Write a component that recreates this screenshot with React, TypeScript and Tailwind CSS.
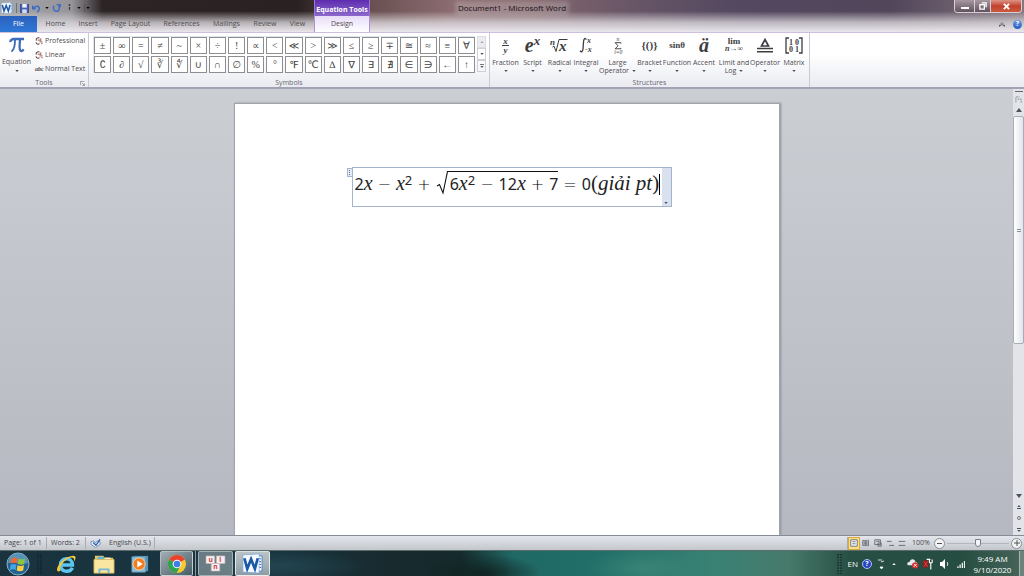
import type { ReactNode } from 'react';
import { clsx } from 'clsx';

const TABS = [
  { name: 'Home', width: 'w-[37px]' },
  { name: 'Insert', width: 'w-[28px]' },
  { name: 'Page Layout', width: 'w-[57px]' },
  { name: 'References', width: 'w-[45px]' },
  { name: 'Mailings', width: 'w-[45px]' },
  { name: 'Review', width: 'w-[32px]' },
  { name: 'View', width: 'w-[33px]' },
];

const SYMBOLS = [
  '±', '∞', '=', '≠', '~', '×', '÷', '!', '∝', '<', '≪', '>', '≫', '≤', '≥', '∓', '≅', '≈', '≡', '∀',
  '∁', '∂', '√', '∛', '∜', '∪', '∩', '∅', '%', '°', '℉', '℃', '∆', '∇', '∃', '∄', '∈', '∋', '←', '↑',
];

function Caret({ className }: { className?: string }) {
  return (
    <svg viewBox="0 0 5 3" className={clsx('h-[2px] w-[4px] shrink-0', className)}>
      <path d="M0 0h5L2.500 3z" fill="currentColor" />
    </svg>
  );
}

function ScrollArrow({ className }: { className?: string }) {
  return (
    <svg viewBox="0 0 6 4" className={clsx('h-1 w-[6px] shrink-0', className)}>
      <path d="M0 0h6L3 4z" fill="currentColor" />
    </svg>
  );
}

function WordLogo({ className }: { className?: string }) {
  return (
    <svg viewBox="0 0 22 22" className={className}>
      <path d="M8 3h13v16H8z" fill="#fff" stroke="#4b83c8" />
      <path d="M18 6h2M18 9h2M18 12h2M18 15h2" stroke="#3b74bd" strokeWidth="1.200" />
      <path d="M1 2L18 1v20L1 20z" fill="#f4f9ff" stroke="#78a8df" strokeWidth=".7" />
      <path d="M2.500 5.500l3 11L9.500 6.500l4 10 3-11" fill="none" stroke="#1d57a7" strokeWidth="2.800" />
    </svg>
  );
}

function TitleBar() {
  return (
    <div className="flex h-4 items-center">
      <div className="flex w-[314px] items-center gap-[3px] pl-px text-[#374a78]">
        <WordLogo className="size-3" />
        <span className="h-[10px] border-l border-[#6f7078]" />
        <button type="button" aria-label="Save">
          <svg viewBox="0 0 10 10" className="size-[9px]">
            <path d="M.5.5h9v9h-9z" fill="#4a62b5" stroke="#31458d" />
            <path d="M2.500 0h5v4h-5z" fill="#eef2ff" />
            <path d="M2.500 6h5v4h-5z" fill="#d5dcf2" />
          </svg>
        </button>
        <button type="button" aria-label="Undo" className="flex items-center gap-1">
          <svg viewBox="0 0 10 10" className="size-[9px]">
            <path d="M2 5c2-4 7-3 6 1-.3 1.500-1 2.300-2.500 3" fill="none" stroke="#3a6cc4" strokeWidth="1.700" />
            <path d="M0 1v5h5z" fill="#3a6cc4" />
          </svg>
          <Caret className="text-black" />
        </button>
        <button type="button" aria-label="Repeat">
          <svg viewBox="0 0 10 10" className="size-[9px]">
            <path d="M2 2c-2 7 6 8 6 3V2" fill="none" stroke="#3f6fc2" strokeWidth="1.700" />
            <path d="M4 0h6v4z" fill="#3f6fc2" />
          </svg>
        </button>
        <button type="button" aria-label="Touch mode" className="ml-1 flex items-center gap-[6px]">
          <svg viewBox="0 0 4 10" className="h-[8px] w-[3px]">
            <path d="M1 0h2v2H1zM1 4h2l-1 5z" fill="#222" />
          </svg>
          <Caret className="text-black" />
        </button>
        <button type="button" aria-label="Customize Quick Access Toolbar" className="flex h-2 items-center border-l border-[#5b5557] pl-px text-black">
          <Caret />
        </button>
      </div>
      <div className="flex h-full w-14 items-center justify-center border-x border-[#9a76d8] bg-linear-to-b from-[#5f2bb0] to-[#8b68cb] pt-[3px] font-bold text-white">
        <span className="whitespace-nowrap">Equation Tools</span>
      </div>
      <h1 className="ml-[88px] bg-white/20 text-[8px] leading-[8px] text-[#17121a] shadow-[0_0_4px_3px_rgba(255,255,255,0.2)]">
        Document1 - Microsoft Word
      </h1>
      <div className="mr-[2px] ml-auto flex h-[13px] self-start overflow-hidden rounded-b-sm border border-t-0 border-[#d8cfd6]">
        <button type="button" aria-label="Minimize" className="flex w-[19px] items-end justify-center bg-linear-to-b from-[#a899a1] to-[#62525e] pb-[3px]">
          <span className="h-[2px] w-2 bg-white" />
        </button>
        <button type="button" aria-label="Restore" className="flex w-[17px] items-center justify-center border-x border-[#d8cfd6] bg-linear-to-b from-[#a899a1] to-[#62525e]">
          <svg viewBox="0 0 9 9" className="size-[8px]">
            <path d="M3 1h5v5M1 3h5v5H1z" fill="none" stroke="#fff" strokeWidth="1.500" />
          </svg>
        </button>
        <button type="button" aria-label="Close" className="flex w-[30px] items-center justify-center bg-linear-to-b from-[#dc9387] via-[#c2402c] to-[#cb5a3f]">
          <svg viewBox="0 0 8 8" className="size-[7px]">
            <path d="M1 1l6 6M7 1L1 7" stroke="#fff" strokeWidth="2.200" />
          </svg>
        </button>
      </div>
    </div>
  );
}

function TabRow() {
  return (
    <nav className="flex h-4 items-stretch text-[#4f4c50]">
      <button type="button" className="w-[37px] bg-linear-to-b from-[#2a61bd] to-[#2f78d6] text-white">File</button>
      {TABS.map(tab => (
        <button type="button" key={tab.name} className={clsx('text-center whitespace-nowrap', tab.width)}>
          {tab.name}
        </button>
      ))}
      <button type="button" className="w-14 border-x border-[#ae92db] bg-linear-to-b from-[#e8ddf7] to-white">Design</button>
      <div className="mr-[2px] ml-auto flex items-center gap-2">
        <button type="button" aria-label="Minimize the Ribbon">
          <svg viewBox="0 0 6 5" className="h-[5px] w-[6px]">
            <path d="M.5 3L3 .7 5.500 3v1.300L3 2.300.5 4.300z" fill="#fff" stroke="#444" strokeWidth=".8" />
          </svg>
        </button>
        <button type="button" aria-label="Help" className="size-[9px] rounded-full bg-linear-to-b from-[#6c9be8] to-[#235bbd] text-center font-bold text-white">?</button>
      </div>
    </nav>
  );
}

function RibbonGroup({ label, className, children, launcher }: {
  label: string;
  className?: string;
  children: ReactNode;
  launcher?: boolean;
}) {
  return (
    <section className={clsx('flex flex-col border-r border-[#cbc9d6]', className)} aria-label={label}>
      <div className="flex flex-1 items-start">{children}</div>
      <div className="relative h-2 text-center text-[#686872]">
        <span>{label}</span>
        {launcher && (
          <button type="button" aria-label="Tools options" className="absolute right-[3px] bottom-px">
            <svg viewBox="0 0 6 6" className="size-[5px]">
              <path d="M.5 5V.5H5M2.500 2.500L5.500 5.500M5.500 3v2.500H3" fill="none" stroke="#777" strokeWidth=".8" />
            </svg>
          </button>
        )}
      </div>
    </section>
  );
}

function SwirlIcon() {
  return (
    <svg viewBox="0 0 9 9" className="size-[8px]">
      <path d="M5 1C2 .5 1 2 1.500 4M1 6c1 2.500 3 2.500 4 1.500" fill="none" stroke="#5d4a48" strokeWidth="1.200" />
      <path d="M3 3.500h3M6.500 1.500v3M5 5.500h3.500M7 7.500h1.500" stroke="#8f5a50" strokeWidth="1.100" />
    </svg>
  );
}

function ToolsGroup() {
  return (
    <RibbonGroup label="Tools" className="w-[89px]" launcher>
      <button type="button" className="flex w-[33px] flex-col items-center text-[#4e4a50]">
        <svg viewBox="0 0 16 16" className="mt-1 h-[16px] w-[16px]">
          <path d="M1 5c1-3 2.500-3 4-3h10" fill="none" stroke="#3f6cb8" strokeWidth="2.300" />
          <path d="M6 3c0 5-.5 9-3 11" fill="none" stroke="#3f6cb8" strokeWidth="1.900" strokeLinecap="round" />
          <path d="M11 3c-.3 4-1 7 0 10 .7 1.500 2.500 1.500 3.500-.7" fill="none" stroke="#3f6cb8" strokeWidth="2.300" />
        </svg>
        <span className="mt-[5px]">Equation</span>
        <Caret className="mt-1" />
      </button>
      <div className="mt-1 flex flex-col items-start gap-[6px] pl-[2px] whitespace-nowrap text-[#4e4a50]">
        <button type="button" className="flex items-center gap-[2px]"><SwirlIcon />Professional</button>
        <button type="button" className="flex items-center gap-[2px]"><SwirlIcon />Linear</button>
        <button type="button" className="flex items-center gap-[2px]">
          <i className="w-2 font-['Liberation_Serif',serif] text-[6px] font-bold">abc</i>Normal Text
        </button>
      </div>
    </RibbonGroup>
  );
}

function SymbolsGroup() {
  return (
    <RibbonGroup label="Symbols" className="w-[401px]">
      <div className="mt-[3px] ml-1 flex flex-1">
        <div className="grid w-[382px] grid-cols-20 gap-[2px] border-t border-l border-[#e3e3ea] font-['Liberation_Serif','DejaVu_Sans',serif] text-[10px] text-[#3f3f43]">
          {SYMBOLS.map(symbol => (
            <button type="button" key={symbol} className="flex h-[17px] items-center justify-center border border-[#8e8e92] bg-white">
              {symbol}
            </button>
          ))}
        </div>
        <div className="ml-[2px] flex w-[9px] flex-col text-[#555]">
          <button type="button" aria-label="Scroll up" className="flex h-3 items-center justify-center border border-[#dcdce2] bg-[#ececf0] text-[#aaa]"><Caret className="rotate-180" /></button>
          <button type="button" aria-label="Scroll down" className="flex h-3 items-center justify-center border border-[#cfcfd8]"><Caret /></button>
          <button type="button" aria-label="More symbols" className="flex h-3 flex-col items-center justify-center gap-px border border-[#cfcfd8]">
            <span className="h-px w-1 bg-[#777]" />
            <Caret />
          </button>
        </div>
      </div>
    </RibbonGroup>
  );
}

function Structure({ name, second, width, children }: {
  name: string;
  second?: string;
  width: string;
  children: ReactNode;
}) {
  return (
    <button type="button" className={clsx('flex shrink-0 flex-col items-center whitespace-nowrap text-[#4e4a50]', width)}>
      <span className="mt-[2px] flex h-5 items-center justify-center font-['Liberation_Serif',serif] text-[#3d3d42]">
        {children}
      </span>
      <span className="mt-1">{name}</span>
      {second ? (
        <span className="flex items-center gap-[3px]">{second}<Caret /></span>
      ) : (
        <Caret className="mt-[3px]" />
      )}
    </button>
  );
}

function StructuresGroup() {
  return (
    <RibbonGroup label="Structures" className="w-[320px]">
      <div className="flex pl-[2px]">
        <Structure name="Fraction" width="w-[27px]">
          <i className="flex flex-col items-center text-[9px] leading-[8px] font-bold">
            <span className="border-b border-current px-px">x</span>
            <span>y</span>
          </i>
        </Structure>
        <Structure name="Script" width="w-[27px]">
          <i className="text-[20px] font-bold">e</i>
          <i className="self-start text-[13px] leading-[12px] font-bold">x</i>
        </Structure>
        <Structure name="Radical" width="w-[27px]">
          <svg viewBox="0 0 19 16" className="h-4 w-[19px]">
            <text x="0" y="8" fontSize="9" fontStyle="italic" fontWeight="bold" fill="#3d3d42">n</text>
            <path d="M2.500 10l1.500-1 2 5.500L9 2.500h8.500" fill="none" stroke="#3d3d42" strokeWidth="1" />
            <text x="9" y="14" fontSize="15" fontStyle="italic" fontWeight="bold" fill="#3d3d42">x</text>
          </svg>
        </Structure>
        <Structure name="Integral" width="w-[26px]">
          <svg viewBox="0 0 15 17" className="h-[17px] w-[15px]">
            <path d="M7.500 2.500C6 .3 4.700 2 4.500 5L4 12c-.3 3-1.500 3.500-3 1.800" fill="none" stroke="#3d3d42" strokeWidth="1.300" />
            <text x="8" y="6" fontSize="8" fontStyle="italic" fontWeight="bold" fill="#3d3d42">x</text>
            <text x="6" y="15" fontSize="8" fontStyle="italic" fontWeight="bold" fill="#3d3d42">-x</text>
          </svg>
        </Structure>
        <Structure name="Large" second="Operator" width="w-[37px]">
          <svg viewBox="0 0 10 18" className="h-[17px] w-[10px]">
            <text x="3.500" y="4" fontSize="6" fontStyle="italic" fill="#3d3d42">n</text>
            <path d="M8 7V6H2l3 3.300L2 12.500h6v-1" fill="none" stroke="#3d3d42" strokeWidth="1" />
            <text x="1" y="18" fontSize="6" fontStyle="italic" fill="#3d3d42">i=0</text>
          </svg>
        </Structure>
        <Structure name="Bracket" width="w-[27px]">
          <span className="text-[11px] font-bold">{'{()}'}</span>
        </Structure>
        <Structure name="Function" width="w-[28px]">
          <span className="text-[9px] font-bold">sinθ</span>
        </Structure>
        <Structure name="Accent" width="w-[26px]">
          <i className="text-[20px] font-bold">ä</i>
        </Structure>
        <Structure name="Limit and" second="Log" width="w-[34px]">
          <span className="flex flex-col items-center text-[9px] leading-[7px] font-bold">
            <span>lim</span>
            <i className="text-[8px]">n→∞</i>
          </span>
        </Structure>
        <Structure name="Operator" width="w-[28px]">
          <svg viewBox="0 0 16 16" className="size-4">
            <path d="M4.500 9L8 2.500 11.500 9z" fill="none" stroke="#3d3d42" strokeWidth="1.700" />
            <path d="M0 11.500h16M0 14.700h16" stroke="#3d3d42" strokeWidth="1.500" />
          </svg>
        </Structure>
        <Structure name="Matrix" width="w-[30px]">
          <svg viewBox="0 0 18 17" className="h-[17px] w-[18px]">
            <path d="M4 1H1v15h3M14 1h3v15h-3" fill="none" stroke="#3d3d42" strokeWidth="1.300" />
            <g fontSize="8" fontWeight="bold" fill="#3d3d42">
              <text x="4" y="8">1</text>
              <text x="10" y="8">0</text>
              <text x="4" y="15">0</text>
              <text x="10" y="15">1</text>
            </g>
          </svg>
        </Structure>
      </div>
    </RibbonGroup>
  );
}

function Operator({ children }: { children: string }) {
  return (
    <span className="mx-[5px]">
      <span className="font-['DejaVu_Sans',sans-serif] leading-none font-extralight text-black">{children}</span>
    </span>
  );
}

function Variable() {
  return <i className="font-['Liberation_Serif',serif] text-[20px] leading-none">x</i>;
}

function Squared() {
  return <><Variable /><sup className="top-[-5px] text-[13px] leading-none">2</sup></>;
}

function Equation() {
  return (
    <div className="mt-[63px] ml-[112px] flex items-start">
      <div className="mt-px flex h-[9px] w-[5px] flex-col items-center justify-center gap-px border border-r-0 border-[#a5b6cf] bg-[#e3eaf5]">
        <span className="size-px bg-[#60789e]" />
        <span className="size-px bg-[#60789e]" />
        <span className="size-px bg-[#60789e]" />
      </div>
      <div className="flex h-10 w-[320px] border border-[#a3b4cc]">
        <div
          role="textbox"
          aria-label="Equation"
          tabIndex={0}
          className="flex flex-1 items-center self-start pt-[3px] pl-[2px] font-['Noto_Sans',sans-serif] text-[16px] leading-6 whitespace-nowrap text-[#222] outline-none"
        >
          <span>2<Variable /></span>
          <Operator>−</Operator>
          <span><Squared /></span>
          <Operator>+</Operator>
          <svg viewBox="0 0 12 26" className="h-[26px] w-3">
            <path d="M1 15l2.500-1.500L7 22 11.500.5H12" fill="none" stroke="#111" strokeWidth="1.100" />
          </svg>
          <span className="flex items-center border-y border-t-[#111] border-b-transparent pl-[2px]">
            <span>6<Squared /></span>
            <Operator>−</Operator>
            <span>12<Variable /></span>
            <Operator>+</Operator>
            <span>7</span>
          </span>
          <Operator>=</Operator>
          <span>
            0
            <span className="font-['Liberation_Serif',serif] text-[21px] leading-none">(<i>giải pt</i>)</span>
          </span>
          <span className="h-[21px] w-px bg-black" />
        </div>
        <button type="button" aria-label="Equation options" className="flex w-[9px] shrink-0 items-end justify-center bg-[#d9e1ef] pb-[2px] text-[#3b4f75]">
          <Caret />
        </button>
      </div>
    </div>
  );
}

function ScrollBar() {
  return (
    <div className="flex w-[11px] flex-col items-center bg-[#e2e4ea] text-[#4c515c]">
      <span className="mt-[2px] h-px w-2 bg-[#62666e]" />
      <button type="button" aria-label="View ruler" className="mt-1">
        <svg viewBox="0 0 8 8" className="size-[7px]">
          <path d="M1 7V1h4M3 3.500h4v4" fill="none" stroke="#777d8a" strokeDasharray="2 1" />
        </svg>
      </button>
      <button type="button" aria-label="Scroll up" className="flex h-[13px] items-center"><ScrollArrow className="rotate-180" /></button>
      <div className="flex w-full flex-1 flex-col">
        <div className="flex h-[61%] flex-col items-center justify-center gap-px rounded-xs border border-[#a9adb8] bg-linear-to-r from-white to-[#e3e5ec]">
          <span className="h-px w-1 bg-[#8b909c]" />
          <span className="h-px w-1 bg-[#8b909c]" />
        </div>
      </div>
      <button type="button" aria-label="Scroll down" className="flex h-[11px] items-center"><ScrollArrow /></button>
      <button type="button" aria-label="Previous page" className="flex h-[11px] flex-col items-center justify-center gap-px"><Caret className="rotate-180" /><span className="h-px w-1 bg-current" /></button>
      <button type="button" aria-label="Select browse object" className="flex h-3 items-center"><span className="size-1 rounded-full border border-[#777]" /></button>
      <button type="button" aria-label="Next page" className="flex h-[11px] flex-col items-center justify-center gap-px"><span className="h-px w-1 bg-current" /><Caret /></button>
    </div>
  );
}

const VIEWS = [
  { name: 'Print Layout', d: 'M1 1h8v8H1zM3 3.500h4M3 6h4' },
  { name: 'Full Screen Reading', d: 'M1 2h3.500v6H1zM6 1v8M8 1v8M2 4h2M2 6h2' },
  { name: 'Web Layout', d: 'M1 1h7v6H1zM3 3h4M5 5h4v4H5z' },
  { name: 'Outline', d: 'M1 3h6M4 8h6' },
  { name: 'Draft', d: 'M1 3h8M1 8h8' },
];

function StatusBar() {
  return (
    <footer className="flex h-[15px] shrink-0 items-center border-t border-[#868c95] bg-linear-to-b from-[#e4e6ed] to-[#c3c7cb] text-[#46464a]">
      <span className="w-[47px] border-r border-[#a8abb2] pl-1 leading-[12px]">Page: 1 of 1</span>
      <span className="w-[38px] pl-1 leading-[12px] whitespace-nowrap">Words: 2</span>
      <button type="button" aria-label="Proofing" className="flex h-3 w-5 items-center justify-center border-l border-[#a8abb2]">
        <svg viewBox="0 0 12 10" className="h-[9px] w-[11px]">
          <path d="M1 3c2-1 3-1 5 1 1-2 3-2 5-1v3L6 9.500 1 6z" fill="#e9eff9" stroke="#6d88b5" />
          <path d="M3.500 4l3 3L11 .5" fill="none" stroke="#315fae" strokeWidth="1.500" />
        </svg>
      </button>
      <span className="h-3 w-[50px] border-r border-[#a8abb2] pl-1 leading-[12px] whitespace-nowrap">English (U.S.)</span>
      <div className="ml-auto flex items-center border-l border-[#a8abb2]">
        {VIEWS.map((view, i) => (
          <button
            type="button"
            key={view.name}
            aria-label={view.name}
            className={clsx('flex h-[13px] w-3 items-center justify-center', i === 0 && 'border border-[#d9a93c] bg-[#fbe08c]')}
          >
            <svg viewBox="0 0 10 10" className="size-[8px]">
              <path d={view.d} fill={i === 0 ? '#fff' : 'none'} stroke="#5c6470" strokeWidth="1.100" />
            </svg>
          </button>
        ))}
      </div>
      <button type="button" className="w-[26px] text-center">100%</button>
      <button type="button" aria-label="Zoom out" className="flex size-[11px] items-center justify-center rounded-full border border-[#8a8d94] bg-[#f2f3f5]">
        <span className="h-px w-[5px] bg-[#555]" />
      </button>
      <input
        type="range"
        aria-label="Zoom"
        defaultValue={50}
        className="mx-[2px] h-[9px] w-[62px] appearance-none bg-[linear-gradient(#b3b6bc,#b3b6bc)] bg-[length:100%_1px] bg-center bg-no-repeat [&::-webkit-slider-thumb]:h-[8px] [&::-webkit-slider-thumb]:w-[6px] [&::-webkit-slider-thumb]:appearance-none [&::-webkit-slider-thumb]:rounded-b-sm [&::-webkit-slider-thumb]:border [&::-webkit-slider-thumb]:border-[#7b7e86] [&::-webkit-slider-thumb]:bg-[#f4f5f8]"
      />
      <button type="button" aria-label="Zoom in" className="mr-[2px] flex size-[11px] items-center justify-center rounded-full border border-[#8a8d94] bg-[#f2f3f5]">
        <svg viewBox="0 0 6 6" className="size-[6px]">
          <path d="M0 3h6M3 0v6" stroke="#555" />
        </svg>
      </button>
    </footer>
  );
}

function Grip({ className }: { className?: string }) {
  return (
    <svg viewBox="0 0 5 20" className={clsx('h-5 w-[5px]', className)}>
      <path d="M1 0v20M4 0v20" stroke="#0b1a1c" strokeWidth="1.200" strokeDasharray="1.200 1.500" />
    </svg>
  );
}

function TaskButton({ name, className, children }: { name: string; className?: string; children: ReactNode }) {
  return (
    <button type="button" aria-label={name} className={clsx('flex h-full items-center justify-center', className)}>
      {children}
    </button>
  );
}

function TaskBar() {
  return (
    <div className="flex h-[26px] shrink-0 items-center border-t border-[#5a6d6c] bg-[radial-gradient(ellipse_90px_16px_at_27%_60%,#234550,transparent),radial-gradient(ellipse_60px_20px_at_47%_90%,#102322,transparent),radial-gradient(ellipse_60px_20px_at_63%_70%,#3a8376,transparent),linear-gradient(to_right,#1a333e,#183541_25%,#182a2e_38%,#152a2c_45%,#206864_50%,#217069_60%,#3a8274_70%,#477a6b_77%,#274f43_83%,#264d41_94%,#48655a)]">
      <TaskButton name="Start" className="w-[35px]">
        <svg viewBox="0 0 24 24" className="size-6">
          <circle cx="12" cy="12" r="11" fill="#24618f" stroke="#8bb5cc" />
          <path d="M2 11a10 10 0 0120 0c-7 2-13-2-20 0z" fill="#6da8ca" opacity=".7" />
          <path d="M5.500 6.500c2-1.300 4-1.300 6-.3l-.8 5.300c-2-1-4-.8-6 .2z" fill="#ef6a32" />
          <path d="M12.500 6.700c2 1 4 .8 6.500-.2l-.8 5.500c-2 1-4.500 1-6.500 0z" fill="#8bc540" />
          <path d="M4.500 13c2-1.200 4-1.200 6-.2l-.8 5.200c-2-1-4-.8-6 .2z" fill="#41a4e5" />
          <path d="M11.500 13.300c2 1 4.500.8 6.500-.2l-.8 5.500c-2 1-4.500 1-6.500 0z" fill="#fbcf41" />
        </svg>
      </TaskButton>
      <Grip className="ml-[2px]" />
      <TaskButton name="Internet Explorer" className="ml-[6px] w-9">
        <svg viewBox="0 0 24 24" className="size-[22px]">
          <path d="M19 16c-3 6-13 5-13-3 0-9 13-9 13 0H7" fill="none" stroke="#5bc6ef" strokeWidth="3.800" />
          <path d="M3 20C-1 17 10 3 20 3c4 0 2 5 1 6 0-3-1-4-3-4C11 6 4 15 6 19c-1 1-2 1.500-3 1z" fill="#f4c83a" />
        </svg>
      </TaskButton>
      <TaskButton name="Windows Explorer" className="w-10">
        <svg viewBox="0 0 24 22" className="h-5 w-[22px]">
          <path d="M2 2h9l2 2h9v16H2z" fill="#e4c566" />
          <path d="M5 3h7v5H5z" fill="#5cb5d8" /><path d="M13 4h6v4h-6z" fill="#fff5cf" />
          <path d="M1 6h22v15H1z" fill="#f8e6a1" stroke="#d8b65b" />
          <path d="M7 21v-4h10v4" fill="none" stroke="#76b7d4" strokeWidth="2" />
        </svg>
      </TaskButton>
      <TaskButton name="Windows Media Player" className="w-8">
        <svg viewBox="0 0 20 20" className="size-[18px]">
          <path d="M4 1h15v17H4z" fill="#5a93b5" /><path d="M1 2h15v17H1z" fill="#8cc0da" stroke="#5a93b5" />
          <circle cx="9" cy="10" r="6.800" fill="#f07e20" stroke="#fbd4a4" />
          <path d="M7 6l6 4-6 4z" fill="#fff" />
        </svg>
      </TaskButton>
      <TaskButton name="Chrome" className="ml-[4px] w-[33px] rounded-xs border border-white/50 bg-linear-to-br from-white/60 to-white/20">
        <svg viewBox="0 0 22 22" className="size-5">
          <circle cx="11" cy="11" r="10" fill="#f7cb2d" />
          <path d="M11 11L2.340 6a10 10 0 0117.320 0z" fill="#e8432f" />
          <path d="M11 11L2.340 6A10 10 0 0010.500 21l4.500-8z" fill="#2fa355" />
          <circle cx="11" cy="11" r="4.800" fill="#fff" /><circle cx="11" cy="11" r="3.700" fill="#3f7fe8" />
        </svg>
      </TaskButton>
      <span className="h-full w-[3px] border-r border-white/50" />
      <TaskButton name="UniKey" className="ml-[2px] w-[35px] rounded-xs border border-white/40 bg-white/35">
        <svg viewBox="0 0 22 18" className="h-[17px] w-[21px]">
          <path d="M1 1h9v8H1zM12 1h9v8h-9zM6.500 9h9v8h-9z" fill="#f7eeee" stroke="#c9b5b8" strokeWidth=".7" />
          <text x="3.500" y="7" fontSize="7" fontWeight="bold" fill="#c5404c">u</text>
          <text x="15" y="7" fontSize="7" fontWeight="bold" fill="#c5404c">i</text>
          <text x="8.500" y="15" fontSize="7" fontWeight="bold" fill="#c5404c">n</text>
        </svg>
      </TaskButton>
      <TaskButton name="Word" className="ml-[2px] w-[35px] rounded-xs border border-white/70 bg-linear-to-b from-white/70 to-white/50">
        <WordLogo className="size-[21px]" />
      </TaskButton>

      <div className="ml-auto flex items-center text-white">
        <Grip />
        <button type="button" className="ml-[6px] text-[8px]">EN</button>
        <button type="button" aria-label="Help" className="ml-1 size-[10px] rounded-full border border-[#adc4f5] bg-[#2745c4] text-center font-bold">?</button>
        <svg viewBox="0 0 6 12" className="ml-[6px] h-3 w-[6px]">
          <path d="M0 2h4M3 4l3-1M2 9h3l-1.500 2z" stroke="#fff" fill="#fff" strokeWidth=".8" />
        </svg>
        <Caret className="ml-2 rotate-180" />
        <svg viewBox="0 0 14 12" className="ml-[10px] h-[11px] w-[13px]">
          <path d="M2 8C0 5 3 4 4 4c1-4 6-3 6 0 3 0 3 4 1 4z" fill="#e7e9ec" />
          <circle cx="10" cy="8" r="3.500" fill="#d63232" /><path d="M8.500 6.500l3 3M11.500 6.500l-3 3" stroke="#fff" />
        </svg>
        <svg viewBox="0 0 12 12" className="ml-1 h-3 w-[11px]">
          <path d="M0 2h6v8H0z" fill="#851f1f" /><path d="M1 3l4 6M5 3L1 9" stroke="#e44" />
          <path d="M8.500 12V5M7 1v3c0 1 3 1 3 0V1M4 1h4" fill="none" stroke="#fff" strokeWidth="1.200" />
        </svg>
        <svg viewBox="0 0 9 12" className="ml-[6px] h-3 w-[9px]">
          <path d="M0 4h2l3-3v10L2 8H0z" fill="#fff" /><path d="M7 4c1 1 1 3 0 4" fill="none" stroke="#dce4e2" />
        </svg>
        <svg viewBox="0 0 9 9" className="ml-2 size-[8px]">
          <path d="M1 9V7M3.500 9V5M6 9V3M8.500 9V1" stroke="#e6efed" strokeWidth="1.500" />
        </svg>
        <div className="ml-px flex w-[53px] flex-col text-center text-[8px] leading-[11px]">
          <time>9:49 AM</time>
          <time>9/10/2020</time>
        </div>
        <button type="button" aria-label="Show desktop" className="h-[25px] w-[5px] border-l border-white/40 bg-white/20" />
      </div>
    </div>
  );
}

export default function App() {
  return (
    <div className="flex h-screen flex-col overflow-hidden font-['Open_Sans',sans-serif] text-[7px] leading-[8px]">
      <header className="shrink-0 bg-[linear-gradient(to_bottom,transparent_35%,#d8d4d8cc_70%,#e9e6ec),linear-gradient(to_right,#a5a6aa,#96949a_7%,#2c2425_10%,#2a2122_29%,#694f50_36%,#8b6c70_44%,#85686d_52%,#6c5868_60%,#534860_72%,#51465a_87%,#857780)]">
        <TitleBar />
        <TabRow />
      </header>
      <div className="flex h-[57px] shrink-0 border-t border-b-2 border-t-[#cdbfdf] border-b-[#a5a2b5] bg-linear-to-b from-white from-40% to-[#e9ebf1]">
        <ToolsGroup />
        <SymbolsGroup />
        <StructuresGroup />
      </div>
      <div className="flex min-h-0 flex-1">
        <main className="flex flex-1 justify-center overflow-hidden bg-linear-to-b from-[#cbced3] to-[#b5b8c0] pt-[14px]">
          <article className="w-[546px] border border-b-0 border-[#a0a4ab] bg-white shadow-[1px_0_2px_#8d9198]">
            <Equation />
          </article>
        </main>
        <ScrollBar />
      </div>
      <StatusBar />
      <TaskBar />
    </div>
  );
}
